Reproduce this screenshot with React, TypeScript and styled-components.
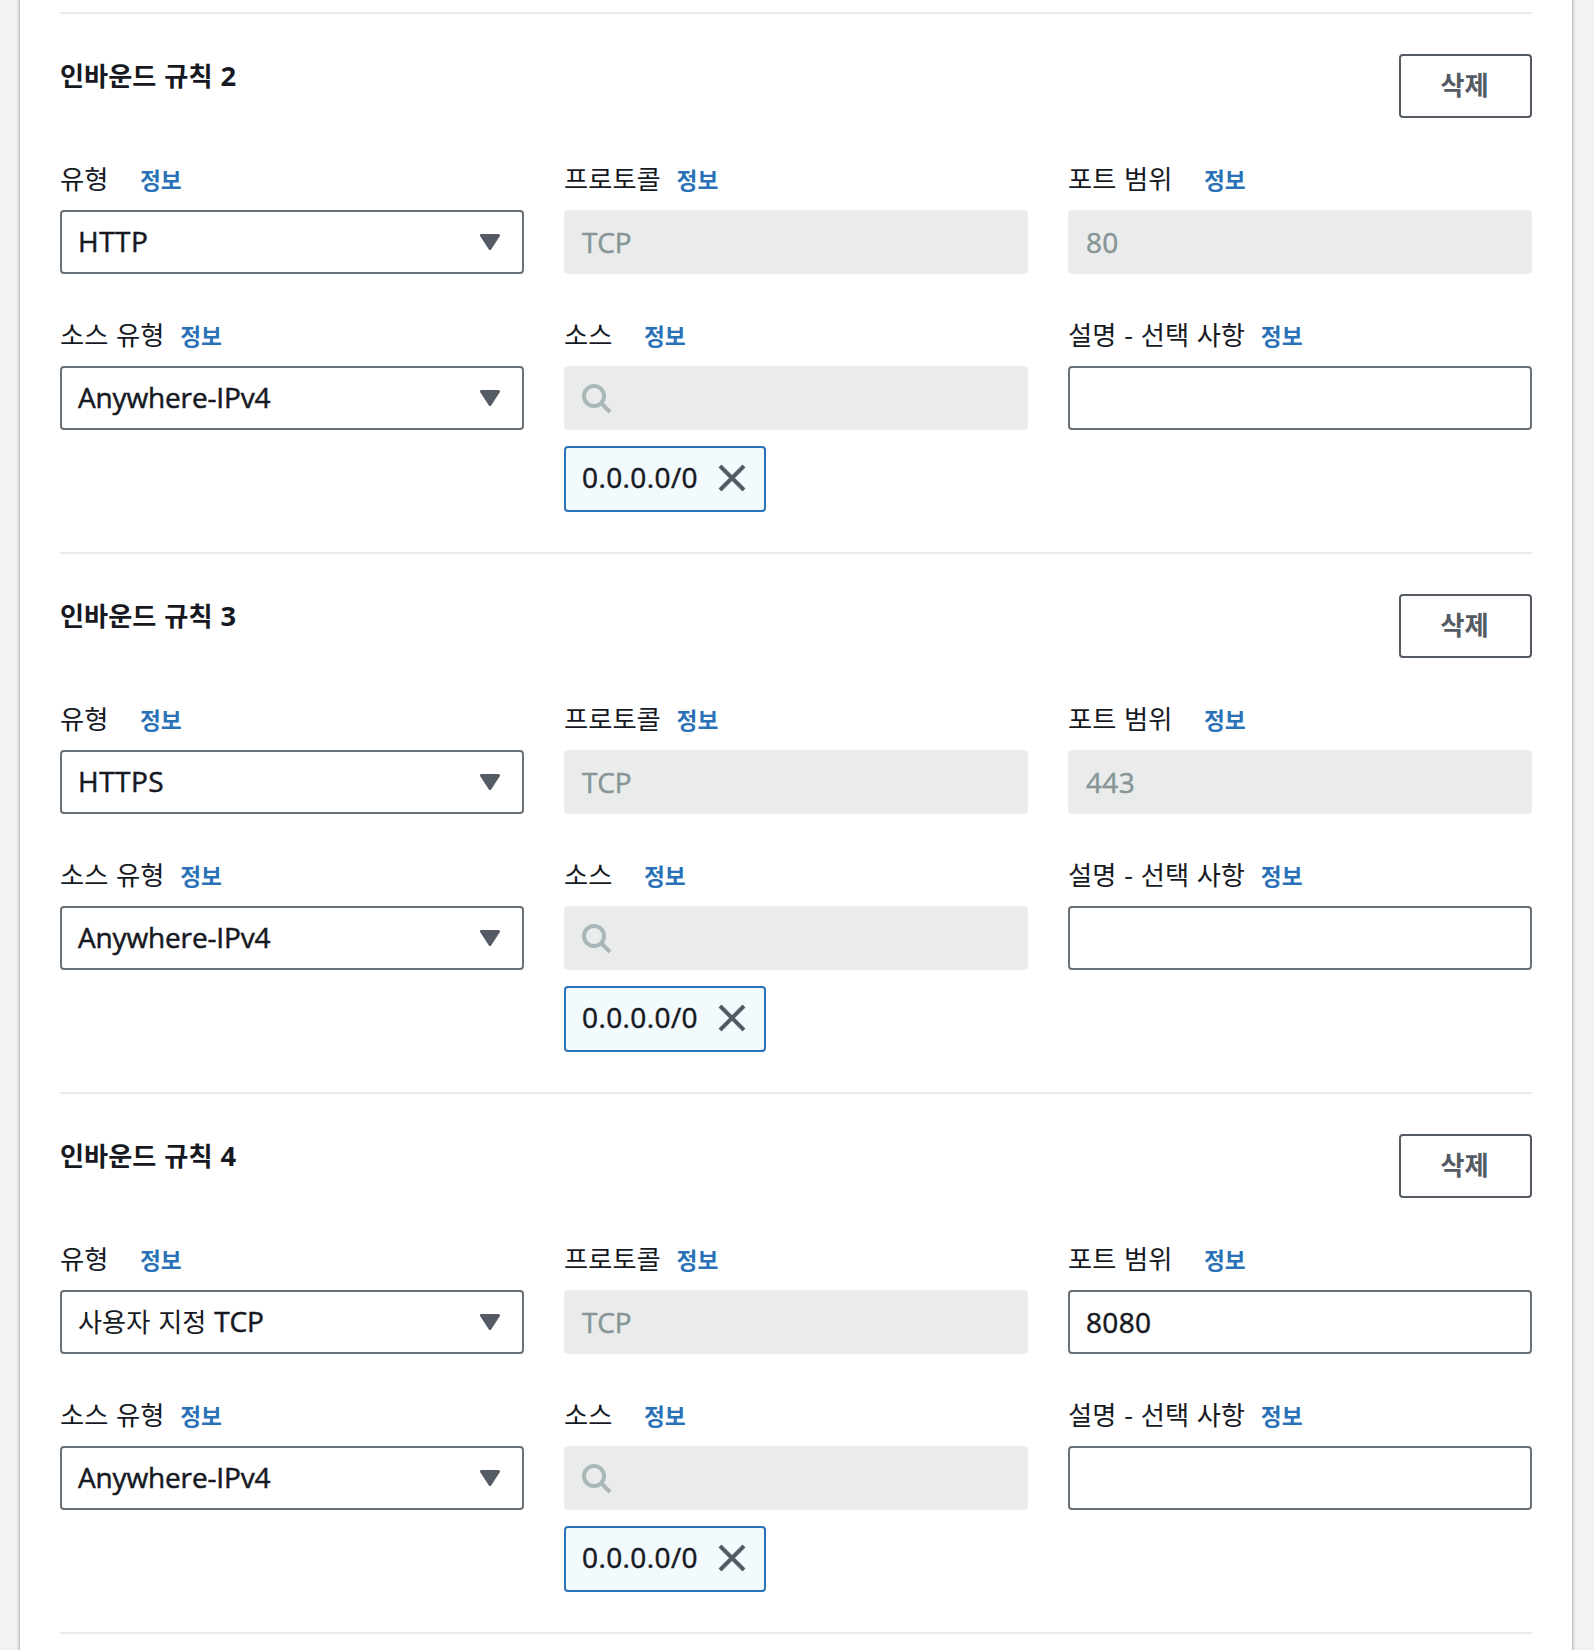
import React from "react";
import styled, { createGlobalStyle } from "styled-components";

const GlobalStyle = createGlobalStyle`
  *, *::before, *::after { box-sizing: border-box; }
  html, body { margin: 0; padding: 0; background: #f1f3f2; }
  body {
    font-family: "Open Sans", "Noto Sans CJK KR", sans-serif;
    color: #16191f;
    overflow: hidden;
  }
`;

const Page = styled.div`
  height: 1650px;
  padding: 0 22px 0 20px;
  overflow: hidden;
  background: #f1f3f2;
`;

const Panel = styled.main`
  height: 1670px;
  margin-top: -10px;
  padding: 22px 40px 0;
  background: #fff;
  box-shadow: 0 2px 2px 0 rgba(0, 28, 36, 0.3), 2px 2px 2px 0 rgba(0, 28, 36, 0.15),
    -2px 2px 2px 0 rgba(0, 28, 36, 0.15);
`;

const Rule = styled.section`
  display: flex;
  flex-direction: column;
  height: 540px;
  border-top: 2px solid #ebebeb;
  padding-top: 40px;
`;

const RuleEnd = styled.div`
  border-top: 2px solid #ebebeb;
`;

const RuleHeader = styled.header`
  display: flex;
  justify-content: space-between;
  align-items: flex-start;
  height: 106px;
`;

const RuleTitle = styled.h3`
  margin: 0;
  padding-top: 1px;
  font: 700 26.2px/40px "Noto Sans CJK KR", sans-serif;
  word-spacing: 2px;
  white-space: nowrap;
`;

const TitleNumber = styled.span`
  font-family: "Open Sans", sans-serif;
  font-size: 27.3px;
`;

const DeleteButton = styled.button`
  width: 133px;
  height: 64px;
  padding: 0 2px 4px 0;
  border: 2px solid #545b64;
  border-radius: 4px;
  background: #fff;
  color: #545b64;
  font: 700 26.3px/40px "Noto Sans CJK KR", sans-serif;
`;

const Fields = styled.div`
  display: grid;
  grid-template-columns: repeat(3, 464px);
  column-gap: 40px;
  grid-template-rows: 156px auto;
`;

const Field = styled.div`
  display: flex;
  flex-direction: column;
  align-items: flex-start;
`;

const LabelRow = styled.div<{ $gap: number }>`
  display: flex;
  align-items: baseline;
  gap: ${(p) => p.$gap}px;
  height: 50px;
  white-space: nowrap;
`;

const Label = styled.label`
  font: 400 26.3px/36px "Noto Sans CJK KR", sans-serif;
  word-spacing: 1.7px;
`;

const InfoLink = styled.a`
  color: #2a71b8;
  font: 700 22.7px/36px "Noto Sans CJK KR", sans-serif;
`;

const Control = styled.div<{ $disabled?: boolean }>`
  display: flex;
  align-items: center;
  justify-content: space-between;
  width: 464px;
  height: 64px;
  padding: 0 22px 0 16px;
  border: 2px solid ${(p) => (p.$disabled ? "#eaecec" : "#687078")};
  border-radius: 4px;
  background: ${(p) => (p.$disabled ? "#eaecec" : "#fff")};
  color: ${(p) => (p.$disabled ? "#879596" : "#16191f")};
`;

const Value = styled.span<{ $raised?: boolean; $tracking?: number }>`
  margin-top: ${(p) => (p.$raised ? -2 : 0)}px;
  font-size: 28px;
  line-height: 40px;
  letter-spacing: ${(p) => p.$tracking ?? -0.15}px;
  white-space: nowrap;
  -webkit-text-stroke: 0.5px currentColor;
`;

const Hangul = styled.span`
  font: 400 26.2px/40px "Noto Sans CJK KR", sans-serif;
  letter-spacing: 0;
  word-spacing: 2px;
  -webkit-text-stroke: 0;
`;

const Token = styled.div`
  display: flex;
  align-items: center;
  justify-content: space-between;
  width: 202px;
  height: 66px;
  margin-top: 16px;
  padding: 0 18px 2px 16px;
  border: 2px solid #2a71b8;
  border-radius: 4px;
  background: #f2fafe;
`;

const Icon = styled.svg`
  display: block;
  flex: none;
`;

function Caret() {
  return (
    <Icon width="20" height="16" viewBox="0 0 20 16">
      <path d="M1.5 1.5h17L10 14.5z" fill="#545b64" stroke="#545b64" strokeWidth="3" strokeLinejoin="round" />
    </Icon>
  );
}

function SearchIcon() {
  return (
    <Icon width="32" height="32" viewBox="2 0 32 32" fill="none" stroke="#aab7b8" strokeWidth="4">
      <circle cx="14" cy="14" r="10" />
      <path d="M21 21l9 9" />
    </Icon>
  );
}

function CloseIcon() {
  return (
    <Icon width="28" height="28" viewBox="0 0 28 28" stroke="#545b64" strokeWidth="4">
      <path d="M2 2l24 24M26 2L2 26" />
    </Icon>
  );
}

function FieldLabel({ text, wide }: { text: string; wide?: boolean }) {
  return (
    <LabelRow $gap={wide ? 31.5 : 15.8}>
      <Label>{text}</Label>
      <InfoLink>정보</InfoLink>
    </LabelRow>
  );
}

type RuleData = {
  n: number;
  type: React.ReactNode;
  tracking?: number;
  port: string;
  editable?: boolean;
};

const rules: RuleData[] = [
  { n: 2, type: "HTTP", tracking: 0.5, port: "80" },
  { n: 3, type: "HTTPS", tracking: 0.5, port: "443" },
  { n: 4, type: <><Hangul>사용자 지정 </Hangul>TCP</>, port: "8080", editable: true },
];

function InboundRule({ n, type, tracking, port, editable }: RuleData) {
  return (
    <Rule>
      <RuleHeader>
        <RuleTitle>
          인바운드 규칙 <TitleNumber>{n}</TitleNumber>
        </RuleTitle>
        <DeleteButton>삭제</DeleteButton>
      </RuleHeader>
      <Fields>
        <Field>
          <FieldLabel text="유형" wide />
          <Control>
            <Value $raised $tracking={tracking}>{type}</Value>
            <Caret />
          </Control>
        </Field>
        <Field>
          <FieldLabel text="프로토콜" />
          <Control $disabled>
            <Value>TCP</Value>
          </Control>
        </Field>
        <Field>
          <FieldLabel text="포트 범위" wide />
          <Control $disabled={!editable}>
            <Value $tracking={0.35}>{port}</Value>
          </Control>
        </Field>
        <Field>
          <FieldLabel text="소스 유형" />
          <Control>
            <Value $raised>Anywhere-IPv4</Value>
            <Caret />
          </Control>
        </Field>
        <Field>
          <FieldLabel text="소스" wide />
          <Control $disabled>
            <SearchIcon />
          </Control>
          <Token>
            <Value $raised $tracking={0.4}>0.0.0.0/0</Value>
            <CloseIcon />
          </Token>
        </Field>
        <Field>
          <FieldLabel text="설명 - 선택 사항" />
          <Control />
        </Field>
      </Fields>
    </Rule>
  );
}

export default function App() {
  return (
    <>
      <GlobalStyle />
      <Page>
        <Panel>
          {rules.map((rule) => (
            <InboundRule key={rule.n} {...rule} />
          ))}
          <RuleEnd />
        </Panel>
      </Page>
    </>
  );
}
